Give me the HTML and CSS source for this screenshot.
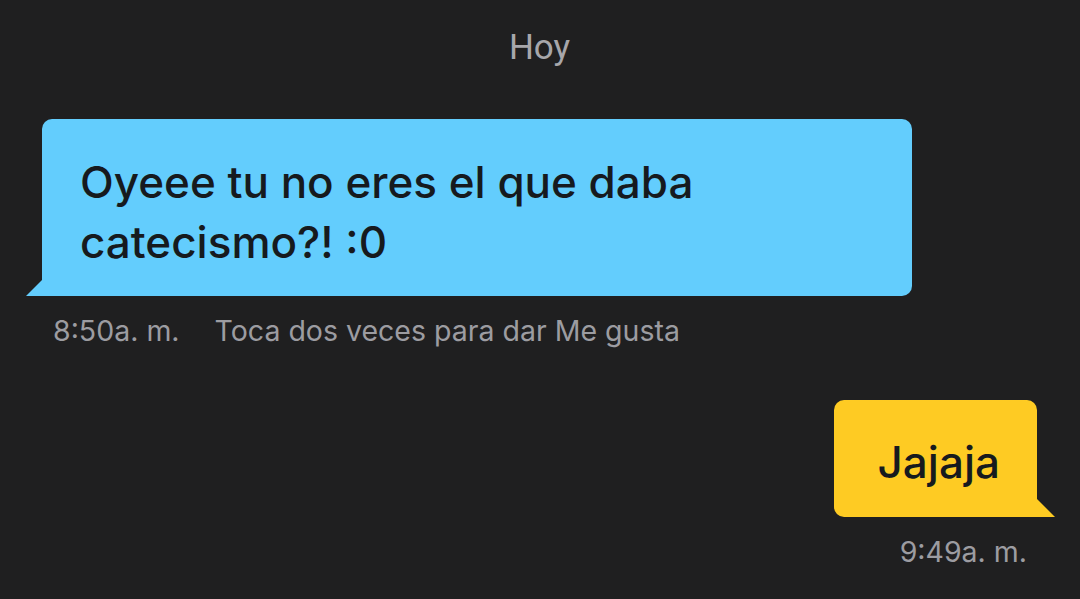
FILE: index.html
```html
<!DOCTYPE html>
<html lang="es">
<head>
    <meta charset="UTF-8">
    <meta name="viewport" content="width=device-width, initial-scale=1.0">
    <title>Chat</title>
    <link rel="stylesheet" href="styles.css">
</head>
<body>
  <div class="chat">
    <div class="day">Hoy</div>

    <div class="msg msg-in">
      <div class="bubble bubble-in">Oyeee tu no eres el que daba catecismo?! :0</div>
      <div class="meta">
        <span>8:50a. m.</span>
        <span>Toca dos veces para dar Me gusta</span>
      </div>
    </div>

    <div class="msg msg-out">
      <div class="bubble bubble-out">Jajaja</div>
      <div class="meta">
        <span>9:49a. m.</span>
      </div>
    </div>
  </div>
</body>
</html>
```

FILE: styles.css
```css
body {
  margin: 0;
  background: #1f1f20;
  font-family: Inter, "Noto Sans", sans-serif;
  height: 599px;
  overflow: hidden;
}
.chat {
  display: flex;
  flex-direction: column;
  padding: 28px 43px 0 42px;
}
.day {
  text-align: center;
  font-family: Roboto, sans-serif;
  font-size: 35px;
  color: #a7a7ab;
  line-height: 40px;
  margin-bottom: 51px;
}
.msg {
  display: flex;
  flex-direction: column;
}
.msg-in {
  align-items: flex-start;
}
.msg-out {
  align-items: flex-end;
  margin-top: 52px;
}
.bubble {
  position: relative;
  font-size: 44px;
  font-weight: 500;
  line-height: 60px;
  color: #161a1e;
  border-radius: 10px;
}
.bubble-in {
  background: #63cdfd;
  width: 870px;
  box-sizing: border-box;
  padding: 33px 150px 24px 38px;
}
.bubble-out {
  background: #fecb23;
  padding: 32px 37px 25px 44px;
}
.bubble::after {
  content: "";
  position: absolute;
  bottom: 0;
  width: 18px;
  height: 18px;
}
.bubble-in::after {
  left: -16px;
  background: #63cdfd;
  clip-path: polygon(100% 0, 100% 100%, 0 100%);
}
.bubble-out::after {
  right: -18px;
  background: #fecb23;
  clip-path: polygon(0 0, 100% 100%, 0 100%);
}
.bubble-in {
  border-bottom-left-radius: 0;
}
.bubble-out {
  border-bottom-right-radius: 0;
}
.meta {
  display: flex;
  gap: 35px;
  font-size: 28.5px;
  color: #9c9ca1;
  line-height: 34px;
  margin-top: 18px;
}
.msg-in .meta {
  padding-left: 11px;
}
.msg-out .meta {
  padding-right: 10px;
}
```
